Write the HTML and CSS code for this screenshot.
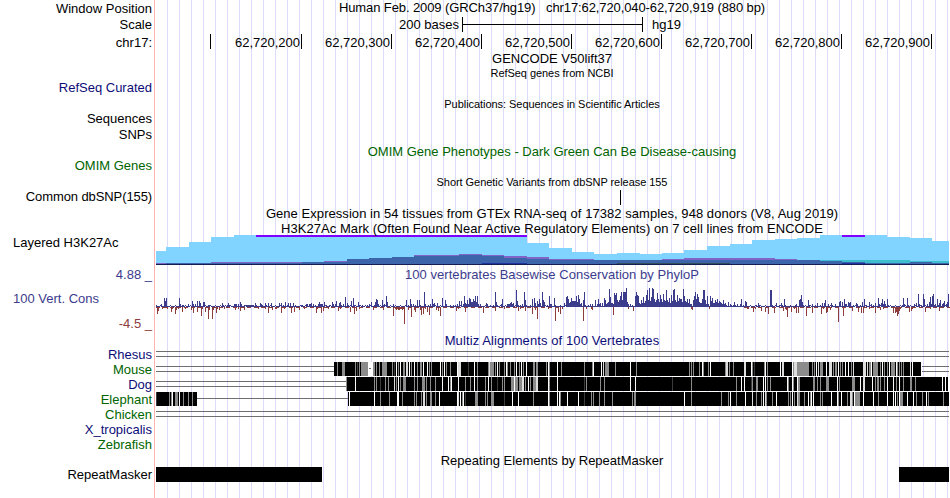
FILE: index.html
```html
<!DOCTYPE html>
<html lang="en">
<head>
  <meta charset="UTF-8">
  <title>Human chr17:62,720,040-62,720,919 - Genome Browser</title>
  <link rel="stylesheet" href="styles.css">
</head>
<body>

<div class="browser">
  <!-- Position and ruler -->
  <div class="row position">
    <div class="label">Window Position</div>
    <div class="title">Human Feb. 2009 (GRCh37/hg19) &nbsp; chr17:62,720,040-62,720,919 (880 bp)</div>
  </div>
  <div class="row scale">
    <div class="label">Scale</div>
    <div class="scale-track">
      <span class="bases">200 bases</span>
      <span class="scale-bar"></span>
      <span>hg19</span>
    </div>
  </div>
  <div class="row ruler">
    <div class="label">chr17:</div>
    <div class="ticks">
      <span class="tick first"></span>
      <span class="tick">62,720,200</span>
      <span class="tick">62,720,300</span>
      <span class="tick">62,720,400</span>
      <span class="tick">62,720,500</span>
      <span class="tick">62,720,600</span>
      <span class="tick">62,720,700</span>
      <span class="tick">62,720,800</span>
      <span class="tick">62,720,900</span>
    </div>
  </div>

  <!-- Genes and variants -->
  <div class="row"><div class="label"></div><div class="title">GENCODE V50lift37</div></div>
  <div class="row"><div class="label"></div><div class="title small">RefSeq genes from NCBI</div></div>
  <div class="row refseq"><div class="label navy">RefSeq Curated</div></div>
  <div class="row pubs"><div class="label"></div><div class="title small">Publications: Sequences in Scientific Articles</div></div>
  <div class="row sequences"><div class="label">Sequences</div></div>
  <div class="row snps"><div class="label">SNPs</div></div>
  <div class="row omim-title"><div class="label"></div><div class="title green">OMIM Gene Phenotypes - Dark Green Can Be Disease-causing</div></div>
  <div class="row omim"><div class="label green">OMIM Genes</div></div>
  <div class="row"><div class="label"></div><div class="title small">Short Genetic Variants from dbSNP release 155</div></div>
  <div class="row dbsnp"><div class="label">Common dbSNP(155)</div><div class="snp-track"><span class="snp"></span></div></div>
  <div class="row gtex"><div class="label"></div><div class="title">Gene Expression in 54 tissues from GTEx RNA-seq of 17382 samples, 948 donors (V8, Aug 2019)</div></div>
  <div class="row h3k-title"><div class="label"></div><div class="title">H3K27Ac Mark (Often Found Near Active Regulatory Elements) on 7 cell lines from ENCODE</div></div>

  <!-- Signal tracks -->
  <div class="row h3k">
    <div class="label left">Layered H3K27Ac</div>
    <svg id="h3k" width="794" height="31" viewBox="156 235 794 31"></svg>
  </div>
  <div class="row cons-title">
    <div class="label cons-blue">4.88 _</div>
    <div class="title cons-blue">100 vertebrates Basewise Conservation by PhyloP</div>
  </div>
  <div class="row cons">
    <div class="label cons-labels">
      <span class="cons-blue name">100 Vert. Cons</span>
      <span class="cons-red">-4.5 _</span>
    </div>
    <svg id="phylop" width="794" height="52" viewBox="156 282 794 52"></svg>
  </div>

  <!-- Alignments -->
  <div class="row multiz"><div class="label"></div><div class="title navy">Multiz Alignments of 100 Vertebrates</div></div>
  <div class="row"><div class="label navy">Rhesus</div><svg class="align" id="rhesus" width="794" height="15" viewBox="156 0 794 15"></svg></div>
  <div class="row"><div class="label green">Mouse</div><svg class="align" id="mouse" width="794" height="15" viewBox="156 0 794 15"></svg></div>
  <div class="row"><div class="label navy">Dog</div><svg class="align" id="dog" width="794" height="15" viewBox="156 0 794 15"></svg></div>
  <div class="row"><div class="label green">Elephant</div><svg class="align" id="elephant" width="794" height="15" viewBox="156 0 794 15"></svg></div>
  <div class="row"><div class="label green">Chicken</div><svg class="align" id="chicken" width="794" height="15" viewBox="156 0 794 15"></svg></div>
  <div class="row"><div class="label navy">X_tropicalis</div></div>
  <div class="row"><div class="label green">Zebrafish</div></div>

  <div class="row repeat-title"><div class="label"></div><div class="title">Repeating Elements by RepeatMasker</div></div>
  <div class="row">
    <div class="label">RepeatMasker</div>
    <div class="repeats"><span class="repeat-a"></span><span class="repeat-b"></span></div>
  </div>
</div>

<script src="tracks.js"></script>
</body>
</html>
```
FILE: styles.css
```css
* {
  margin: 0;
  padding: 0;
  box-sizing: border-box;
}

body {
  font-family: "Liberation Sans", Arial, sans-serif;
  font-size: 13px;
  background: #fff;
  color: #000;
  overflow: hidden;
}

/* guide lines every 12px behind the tracks, red line next to the labels */
.browser {
  width: 950px;
  height: 498px;
  overflow: hidden;
  background:
    linear-gradient(#ffb4b4, #ffb4b4) 154px 0 / 1px 100% no-repeat,
    repeating-linear-gradient(90deg, #dcdcfa 0, #dcdcfa 1px, transparent 1px, transparent 12px) 167px 0 / 783px 100% no-repeat;
}

.row {
  display: grid;
  grid-template-columns: 152px 794px;
  column-gap: 4px;
  height: 15px;
  line-height: 15px;
  white-space: pre;
}

.row svg {
  display: block;
  shape-rendering: crispEdges;
}

.label {
  text-align: right;
}

.label.left {
  text-align: left;
  padding-left: 13px;
}

.title {
  text-align: center;
  padding-right: 2px;
}

.small {
  font-size: 11px;
  letter-spacing: -0.05px;
}

.navy { color: #0c0c78; }
.green { color: #006400; }
.cons-blue { color: #3c3c8c; }
.cons-red { color: #8c3c3c; }

.position {
  height: 17px;
}

.position .label {
  padding-top: 1px;
}

.position .title {
  letter-spacing: -0.1px;
}

.scale {
  height: 17px;
}

.scale-track {
  display: flex;
  padding-left: 243px;
}

.bases {
  width: 63px;
}

.scale-bar {
  width: 181px;
  height: 15px;
  margin-right: 9px;
  border: solid #000;
  border-width: 0 1px;
  background: linear-gradient(#000, #000) 0 7px / 100% 1px no-repeat;
}

.ruler {
  height: 17px;
}

.ruler .label {
  padding-top: 1px;
}

.ticks {
  display: flex;
}

.tick {
  width: 90px;
  height: 15px;
  line-height: 18px;
  padding-right: 1px;
  text-align: right;
  border-right: 1px solid #000;
}

.tick.first {
  width: 55px;
}

.tick.first + .tick {
  width: 91px;
}

.refseq { line-height: 13px; }
.pubs { line-height: 17px; }
.sequences { height: 16px; }
.snps { height: 18px; }
.omim-title { line-height: 13px; }
.omim { line-height: 12px; }

.dbsnp .label {
  line-height: 13px;
  letter-spacing: -0.1px;
}

.snp-track {
  padding-left: 464px;
}

.snp {
  display: block;
  width: 1px;
  height: 15px;
  background: #000;
}

.gtex {
  height: 16px;
  line-height: 17px;
  letter-spacing: 0.055px;
}

/* chart starts right under the title and touches its descenders */
.h3k-title {
  height: 14px;
  letter-spacing: 0.05px;
  position: relative;
  z-index: 1;
}

.h3k {
  height: 32px;
}

.cons-title .title {
  letter-spacing: 0.04px;
}

.cons {
  height: 51px;
}

.cons-labels {
  display: flex;
  flex-direction: column;
  justify-content: space-between;
  height: 49px;
  padding-top: 9px;
}

.cons-labels .name {
  text-align: left;
  padding-left: 13px;
}

.multiz {
  height: 14px;
  letter-spacing: 0.1px;
}

.repeat-title {
  line-height: 17px;
}

.repeats {
  display: flex;
  justify-content: space-between;
  width: 793px;
  height: 15px;
}

.repeat-a,
.repeat-b {
  background: #000;
}

.repeat-a { width: 166px; }
.repeat-b { width: 50px; }
```
FILE: tracks.js
```js
const NS = 'http://www.w3.org/2000/svg';

function rect(svg, x, y, w, h, fill) {
  const r = document.createElementNS(NS, 'rect');
  r.setAttribute('x', x);
  r.setAttribute('y', y);
  r.setAttribute('width', w);
  r.setAttribute('height', h);
  r.setAttribute('fill', fill);
  svg.appendChild(r);
}

// steps: [x, top] pairs, each step runs to the next x
function steps(svg, list, end, bottom, fill) {
  list.forEach(([x, y], i) => {
    const next = i + 1 < list.length ? list[i + 1][0] : end;
    rect(svg, x, y, next - x, bottom - y, fill);
  });
}

// Layered H3K27Ac
const h3k = document.getElementById('h3k');
steps(h3k, [[156, 251], [166, 247], [189, 242], [211, 237], [234, 235], [527, 243], [549, 248], [572, 252],
  [594, 254], [617, 253], [640, 254], [662, 253], [684, 250], [707, 246], [730, 244], [752, 240], [775, 239],
  [797, 238], [820, 235], [887, 237], [910, 238], [932, 241]], 949, 264, '#80d4ff');
rect(h3k, 256, 235, 271, 2, '#8000ff');
rect(h3k, 842, 235, 23, 2, '#8000ff');
steps(h3k, [[156, 263], [211, 262], [324, 261], [347, 259]], 347, 264, '#8064c8');
steps(h3k, [[414, 255], [459, 254], [482, 255], [504, 256], [527, 257], [549, 259]], 594, 264, '#8064c8');
steps(h3k, [[662, 259], [684, 258], [775, 259]], 797, 264, '#8064c8');
steps(h3k, [[820, 260], [910, 261]], 949, 264, '#3cbecd');
steps(h3k, [[166, 263], [302, 262], [347, 259], [369, 258], [392, 257], [414, 256], [459, 255], [482, 256],
  [504, 258], [527, 259], [549, 260], [820, 261], [842, 262], [865, 263], [910, 262], [932, 263]], 949, 264, '#3c64aa');
rect(h3k, 156, 264, 793, 1, '#141e50');
rect(h3k, 482, 263, 45, 1, '#1e32a0');
rect(h3k, 617, 263, 113, 1, '#32505a');
rect(h3k, 842, 263, 23, 1, '#1e32a0');

// PhyloP scores, x:height
const up = `156:2 158:1 161:3 164:9 165:6 166:9 172:1 179:9 180:3 182:2 183:2 186:1 188:3 192:6 193:3 195:3 197:6 199:6 200:4
203:5 204:5 208:2 209:2 222:4 223:2 227:2 228:4 229:2 234:3 235:3 236:3 238:3 240:5 241:3 244:2 246:2 247:2 248:2 249:2
250:2 251:2 252:2 253:2 255:4 256:2 260:4 261:3 262:2 265:4 266:2 268:4 271:4 276:1 279:4 281:4 283:2 285:5 287:2 288:4
290:4 293:4 295:2 301:2 302:2 306:3 307:3 309:3 310:3 311:4 313:3 315:2 318:3 319:5 320:3 321:3 322:3 324:5 326:2 329:2
332:5 333:3 335:3 336:6 339:4 340:5 341:2 343:3 345:10 347:4 348:2 351:6 353:9 354:2 358:5 359:2 362:2 367:2 369:3 371:5
374:2 375:5 376:8 377:7 378:3 382:7 383:2 384:3 386:11 387:5 393:3 406:7 408:2 410:8 411:3 413:3 415:2 417:7 419:7
420:2 424:15 425:3 428:2 430:3 432:8 433:3 434:4 437:4 442:9 445:7 446:3 450:2 453:2 455:2
457:3 459:6 461:6 463:3 464:11 465:4 466:3 467:7 468:3 469:9 470:8 471:5 472:5 473:8 474:6 475:11 476:5 477:11 478:3 480:3
486:4 487:3 490:2 493:2 495:15 496:5 497:2 501:3 502:8 507:3 508:3 509:3 510:4 511:5 512:3 513:4 516:17 517:6 518:2 520:2
522:3 524:15 525:7 526:2 530:2 532:8 534:9 535:4 537:6 538:3 539:8 540:4 542:15 543:7 544:5 547:2 549:11 550:3 551:3 554:9
555:2 560:2 564:4 566:10 567:11 568:8 569:4 570:5 571:9 572:6 573:6 574:6 575:6 576:11 577:5 578:12 579:8 580:3 581:4 583:7
584:15 585:2 588:2 590:3 592:3 595:7 597:3 598:8 599:3 600:4 602:4 604:9 605:7 606:3 607:4 608:5 609:18 610:10 611:4 612:4
613:3 614:14 615:12 616:14 617:7 618:5 619:7 620:11 621:15 622:7 623:15 624:15 625:15 626:19 627:5 628:3 630:3 632:2 635:11
636:15 637:12 638:11 639:4 640:3 641:7 642:4 643:10 644:4 645:6 646:12 647:17 648:7 649:19 650:6 651:10 652:19 653:18 654:8
655:5 656:7 657:14 658:8 659:5 660:12 661:8 662:5 663:13 664:7 665:6 666:17 667:7 668:5 669:9 670:4 671:12 672:6 673:17
674:18 675:7 676:5 677:12 678:6 679:9 680:8 681:8 682:5 683:18 684:11 685:6 686:5 687:8 688:4 689:8 690:3 691:3 693:7
694:11 695:15 696:8 697:13 698:10 699:5 700:4 701:4 702:8 703:17 704:17 705:7 706:3 707:11 708:3 710:11 711:6 712:9 713:4
714:4 715:7 716:5 717:8 718:4 719:6 720:5 721:4 722:3 723:7 724:3 725:4 726:2 728:5 730:3 731:2 733:2 734:5 735:2 737:3
740:3 741:8 743:2 745:6 746:5 749:1 756:2 758:4 759:2 770:17 771:17 772:2 776:4 779:2 781:4 782:2 784:8 785:2 790:2 795:2
796:3 799:7 800:8 801:12 802:5 803:2 808:7 809:2 812:3 815:2 817:4 820:2 822:4 824:4 825:7 828:3 831:4 832:2 835:3 839:5
840:6 842:5 844:8 845:3 846:3 848:5 849:4 850:5 853:2 856:4 857:3 860:2 862:5 864:8 866:2 869:5 871:3 873:2 875:4 878:9
879:3 881:4 882:8 883:3 884:6 885:3 887:8 888:2 902:2 903:9 904:3 907:9 908:2 914:3 916:4 918:13 919:3 921:2 923:13 924:8
927:3 929:5 930:10 931:3 932:11 933:13 934:2 935:3 937:8 938:2 939:4 940:7 942:3 943:4 944:6 946:3 947:5 948:13`;

const down = `157:7 158:4 162:2 167:2 171:5 172:2 175:7 176:3 178:2 182:5 185:2 191:3 193:6 197:5 201:9 202:2 205:5 208:12 209:3
212:12 213:3 216:6 217:2 219:3 224:2 235:3 238:2 240:4 244:3 258:2 265:2 268:6 272:3 275:2 276:2 281:6 284:2 291:6 294:5
299:3 304:2 316:6 317:2 321:6 323:4 328:2 338:4 340:2 350:5 354:7 356:4 359:2 373:3 383:3 393:9 395:2 396:3 397:2 398:3
399:3 400:2 401:2 402:3 403:2 404:17 408:3 411:10 414:3 415:5 420:3 421:8 423:7 425:2 427:5 429:8 436:3 438:4 440:9 456:4
458:2 465:5 483:6 495:4 504:2 518:4 520:2 525:4 532:7 535:3 537:12 548:2 555:14 558:5 560:7 562:2 583:14 586:2 591:2 592:3
613:8 628:2 633:4 691:2 692:3 709:2 747:2 748:2 753:5 755:2 761:4 765:5 768:7 774:6 783:4 785:2 786:3 787:10 791:5 794:2
796:6 798:6 806:9 812:6 821:7 823:2 826:6 827:5 830:3 838:15 843:9 852:4 858:5 861:6 863:6 869:2 875:6 880:3 883:2 893:6
895:6 896:5 897:9 898:7 899:4 900:2 909:5 911:4 912:2 925:5 930:2 939:4`;

const phylop = document.getElementById('phylop');
for (let x = 156; x < 949; x++) {
  rect(phylop, x, x % 5 ? 306 : 305, 1, 1, '#3c3c8c');
}
for (let x = 156; x < 949; x += 7) {
  if (x < 560 || x > 740) rect(phylop, x, 307, 4, 1, '#8c3c3c');
}
up.split(/\s+/).forEach(p => {
  const [x, h] = p.split(':').map(Number);
  rect(phylop, x, 307 - h, 1, h, '#3c3c8c');
});
down.split(/\s+/).forEach(p => {
  const [x, h] = p.split(':').map(Number);
  rect(phylop, x, 307, 1, h, '#8c3c3c');
});

// Multiz: black blocks with gaps. w white, l light, g gray, d dark
const shades = { w: '#fff', l: '#dcdcdc', g: '#8c8c8c', d: '#3c3c3c' };

function lines(id, ys, from, to) {
  ys.forEach(y => rect(document.getElementById(id), from, y, to - from, 1, '#6e6e6e'));
}

function block(id, from, to, marks) {
  const svg = document.getElementById(id);
  rect(svg, from, 0, to - from, 14, '#000');
  marks.trim().split(/\s+/).forEach(m => {
    const [, x, shade, w] = m.match(/(\d+)([wlgd])(\d*)/);
    rect(svg, x, 0, w || 1, 14, shades[shade]);
  });
}

lines('rhesus', [4, 9], 156, 949);
lines('chicken', [4, 9], 156, 949);
lines('mouse', [4, 9], 156, 334);
lines('mouse', [4, 9], 922, 949);
lines('dog', [4, 9], 156, 346);
lines('elephant', [6], 197, 348);

block('mouse', 334, 921, `337g 342g3 355g 357d 359g 361g7 368w5 373g2 376g 379g 382g5 392g 394d 396w 398g 400w 403g2 406l2 409w
411g 414w 417g 420g2 423w 427w 429g 431g 440w 442g 444w 446g 450g 457w 458l3 468d 474w 477g 488g 489l 490g4 495g 497w 499g 504g
506w 507g 510g 514g 516w 519g 521w 523g 526w 533g2 536g2 546g 548w 549g 557w 561g 584g 592g 593w 601w 603l 605g4 615g 630w
636g 689g 691g 693g 699g 702w 703g 708g 710w 725g 726l2 729g 733g 744l2 751w 752g 754d 764g 765w 767g 780w 782l2 792w 793g
794l3 797g12 812g 814g 816w 818l 820g 821g2 826w 829l3 833g 835g2 838w 840g 842g 845w 848w 851g 853l 863l3 867l 869g2
871w 873g5 880g 882w 884g 887g 889w 891g4 896w 897g 899g 901g 903g 910l 912w`);
rect(document.getElementById('mouse'), 369, 6, 2, 1, '#6e6e6e');

block('dog', 346, 949, `346g 355w 374g 376g 380d 385g 388g 394l 396g 398w 400g 403g3 414g 417g 422g3 426g 430g 435g 442w 448w 450g
451w 458w 465g 470g 474w 477g 485g 488w 491g 497d 502g 504g 511g3 514w 515g3 519g3 522l2 525g 528w 530g 533g3 536l2 548w 549g
557w 584d 586g 600g 604g 630w 635w 672d 691g 736g 741w 744w 751d 752g 756g2 763w 765w 767g 770g 787w 788g 792w 793g 797w 798g2
813g2 817g 820g 826g3 837w 839g 852g3 860w 863l2 872w 875g 877g2 880g 884g 887w 893w 896g 899w 903g 910g2 915g 942w 945w 948w`);

block('elephant', 156, 197, '156d 169g 171g 172w 175g 176g2 179w 183g 188g 192g');
block('elephant', 348, 949, `349w 374w 380g 389g 397w 398w 402g 414g 416g 421g 423l2 426g 430g2 435g 439w 457w 458l 460w 462g 463w
465d 475g3 485g 487g 491g3 504d 512w 518w 533g 548w 549g 557w 559w 560g 567w 578w 584d 591g 593g 599g 604g 612g 632g 634g2
684w 691g 721g 728g 730w 736g 745w 752l 756g 761g 763w 765l 766g 772g 776w 788g 790g 792w 794g 797l 798g2 804g 808w 810g 811w
813w 820g 822g 831w 837w 838g 841w 847g 850l2 852g 854w 855g5 863w 873w 878g 887w 893w 895w 897g 899w 900g3 907w 913w 916g
922g 926w 928g 943g`);
```
